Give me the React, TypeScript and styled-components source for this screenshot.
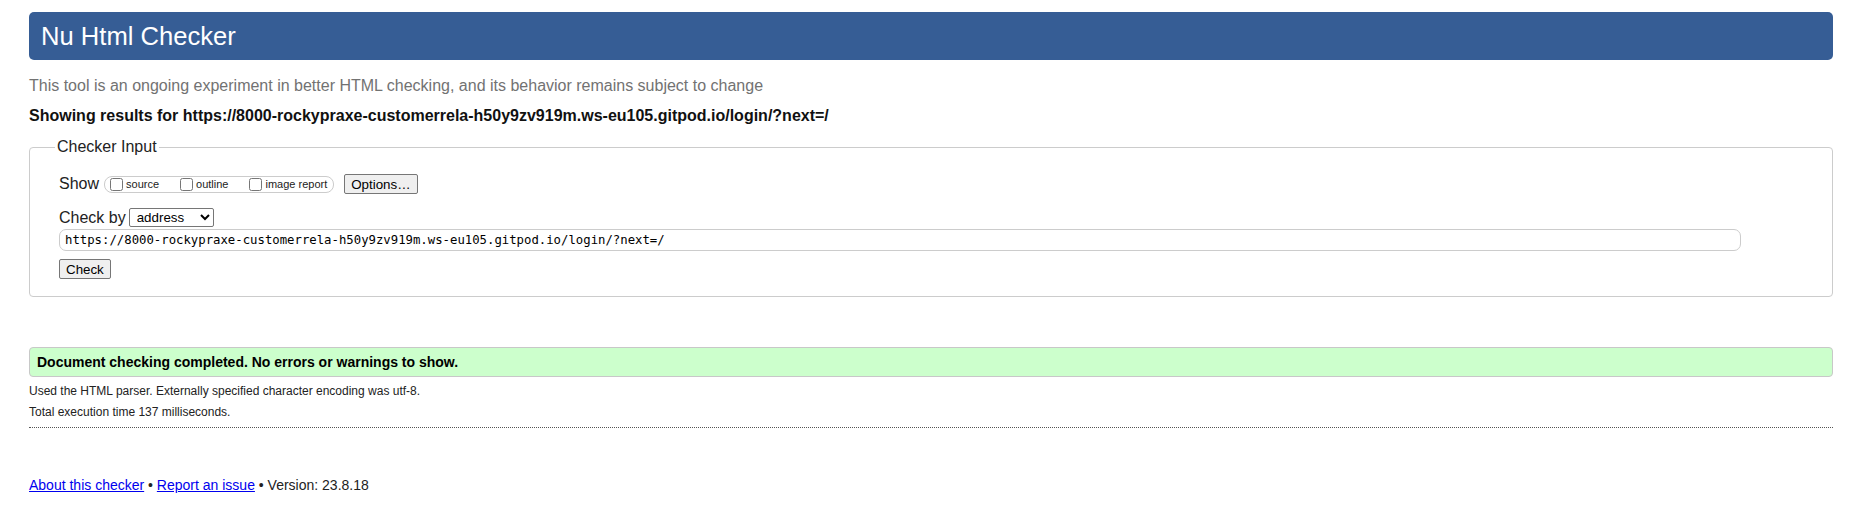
import React from 'react';
import styled, { createGlobalStyle } from 'styled-components';

const GlobalStyle = createGlobalStyle`
  html, body {
    margin: 0;
    padding: 0;
    background: #fff;
    color: #222;
    font-family: "Liberation Sans", Arial, sans-serif;
  }
`;

const Page = styled.div`
  padding: 12px 24px 40px 29px;
`;

const Title = styled.h1`
  margin: 0;
  height: 48px;
  display: flex;
  align-items: center;
  padding: 0 12px;
  background: #365d95;
  color: #fff;
  font-size: 25.6px;
  font-weight: normal;
  border-radius: 5px;
`;

const Intro = styled.p`
  margin: 17px 0 0;
  font-size: 16px;
  line-height: 18px;
  color: #727272;
`;

const Results = styled.p`
  margin: 12px 0 0;
  font-size: 16px;
  line-height: 18px;
  font-weight: bold;
  color: #111;
`;

const Fieldset = styled.fieldset`
  margin: 13px 0 0;
  padding: 18px 29px 17px;
  border: 1px solid #cccccc;
  border-radius: 4px;
  min-width: 0;
`;

const Legend = styled.legend`
  margin-left: -4px;
  padding: 0 2px;
  font-size: 16px;
  line-height: 18px;
  color: #222;
`;

const Row = styled.div<{ $mt?: number }>`
  display: flex;
  align-items: center;
  margin-top: ${({ $mt }) => $mt ?? 0}px;
  font-size: 16px;
  color: #222;
`;

const Label = styled.span`
  margin-right: 3px;
`;

const Pill = styled.span`
  display: inline-flex;
  align-items: center;
  height: 15px;
  padding: 0 6px 0 1px;
  border: 1px solid #cccccc;
  border-radius: 8px;
  margin-left: 2px;
  margin-right: 10px;
`;

const CheckLabel = styled.label<{ $last?: boolean }>`
  display: inline-flex;
  align-items: center;
  font-size: 11px;
  color: #222;
  margin-right: ${({ $last }) => ($last ? 0 : 17)}px;

  input {
    width: 13px;
    height: 13px;
    margin: 0 3px 0 4px;
  }
`;

const Button = styled.button`
  height: 20px;
  padding: 0 6px;
  font-family: "Liberation Sans", Arial, sans-serif;
  font-size: 13.333px;
  color: #000;
  background: #efefef;
  border: 1px solid #767676;
  border-radius: 2px;
`;

const Select = styled.select`
  width: 85px;
  height: 19px;
  padding: 0 0 0 3px;
  font-family: "Liberation Sans", Arial, sans-serif;
  font-size: 13.333px;
  color: #000;
  background: #fff;
  border: 1px solid #767676;
  border-radius: 2px;
`;

const UrlInput = styled.input`
  box-sizing: border-box;
  width: 1682px;
  height: 22px;
  padding: 0 5px;
  font-family: "DejaVu Sans Mono", "Liberation Mono", monospace;
  font-size: 12.3px;
  color: #000;
  border: 1px solid #cccccc;
  border-radius: 7px;
  outline: none;
`;

const Success = styled.div`
  margin-top: 50px;
  padding: 6px 7px;
  background: #ccffcc;
  border: 1px solid #c8c8c8;
  border-radius: 4px;
  font-size: 14px;
  line-height: 16px;
  font-weight: bold;
  color: #000;
`;

const Detail = styled.p`
  margin: 7px 0 0;
  font-size: 12px;
  line-height: 14px;
  color: #222;
`;

const Rule = styled.hr`
  margin: 8px 0 0;
  border: 0;
  border-top: 1px dotted #555;
  height: 0;
`;

const Footer = styled.p`
  margin: 49px 0 0;
  font-size: 14px;
  line-height: 16px;
  color: #222;

  a {
    color: #0000ee;
    text-decoration: underline;
  }
`;

const url =
  'https://8000-rockypraxe-customerrela-h50y9zv919m.ws-eu105.gitpod.io/login/?next=/';

export default function App() {
  return (
    <Page>
      <GlobalStyle />
      <Title>Nu Html Checker</Title>
      <Intro>
        This tool is an ongoing experiment in better HTML checking, and its
        behavior remains subject to change
      </Intro>
      <Results>Showing results for {url}</Results>

      <Fieldset>
        <Legend>Checker Input</Legend>
        <Row>
          <Label>Show</Label>
          <Pill>
            <CheckLabel>
              <input type="checkbox" />
              source
            </CheckLabel>
            <CheckLabel>
              <input type="checkbox" />
              outline
            </CheckLabel>
            <CheckLabel $last>
              <input type="checkbox" />
              image report
            </CheckLabel>
          </Pill>
          <Button type="button">Options…</Button>
        </Row>
        <Row $mt={14}>
          <Label>Check by</Label>
          <Select defaultValue="address">
            <option value="address">address</option>
            <option value="file">file upload</option>
            <option value="text">text input</option>
          </Select>
        </Row>
        <Row $mt={2}>
          <UrlInput type="url" defaultValue={url} />
        </Row>
        <Row $mt={8}>
          <Button type="submit">Check</Button>
        </Row>
      </Fieldset>

      <Success>Document checking completed. No errors or warnings to show.</Success>
      <Detail>
        Used the HTML parser. Externally specified character encoding was utf-8.
      </Detail>
      <Detail>Total execution time 137 milliseconds.</Detail>
      <Rule />

      <Footer>
        <a href="#about">About this checker</a> • <a href="#report">Report an issue</a> •
        Version: 23.8.18
      </Footer>
    </Page>
  );
}
